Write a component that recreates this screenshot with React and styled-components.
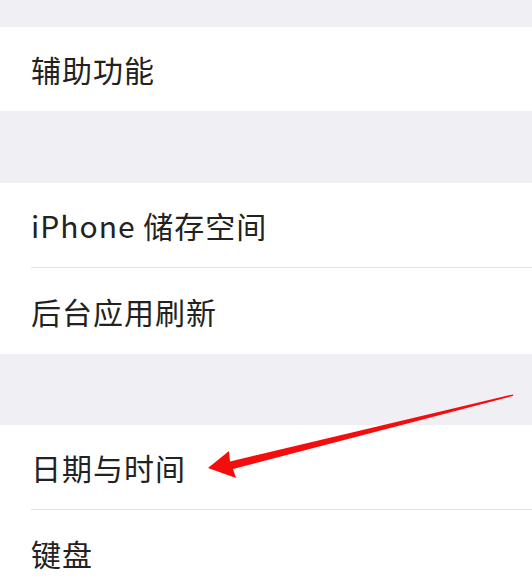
import React from "react";
import styled, { createGlobalStyle } from "styled-components";

const GlobalStyle = createGlobalStyle`
  html, body {
    margin: 0;
    padding: 0;
    background: #efeff4;
  }
  body {
    font-family: "Noto Sans CJK SC", "Noto Sans", sans-serif;
  }
`;

const Screen = styled.div`
  position: relative;
  width: 532px;
  height: 580px;
  overflow: hidden;
  background: #efeff4;
`;

const Gap = styled.div`
  height: ${(p) => p.h}px;
  background: #efeff4;
`;

const Section = styled.div`
  background: #ffffff;
`;

const Row = styled.div`
  height: ${(p) => p.h || 85}px;
  margin-left: 31px;
  display: flex;
  align-items: center;
  box-sizing: border-box;
  border-bottom: ${(p) => (p.last ? "none" : "1px solid #e3e3e6")};
`;

const Label = styled.span`
  font-size: 30px;
  color: #222222;
  letter-spacing: 1px;
  line-height: 1;
`;

const Arrow = styled.svg`
  position: absolute;
  left: 0;
  top: 0;
  pointer-events: none;
`;

export default function App() {
  return (
    <>
      <GlobalStyle />
      <Screen>
        <Gap h={27} />
        <Section>
          <Row h={84} last>
            <Label>辅助功能</Label>
          </Row>
        </Section>
        <Gap h={72} />
        <Section>
          <Row h={85}>
            <Label>iPhone 储存空间</Label>
          </Row>
          <Row h={86} last>
            <Label>后台应用刷新</Label>
          </Row>
        </Section>
        <Gap h={71} />
        <Section>
          <Row h={85}>
            <Label>日期与时间</Label>
          </Row>
          <Row h={85} last>
            <Label>键盘</Label>
          </Row>
        </Section>
        <Arrow width="532" height="580" viewBox="0 0 532 580">
          <polygon
            fill="#f50d0d"
            points="208,468 229,451 230,461.5 513,394.4 513.2,395.8 233,469 236,478"
          />
        </Arrow>
      </Screen>
    </>
  );
}
